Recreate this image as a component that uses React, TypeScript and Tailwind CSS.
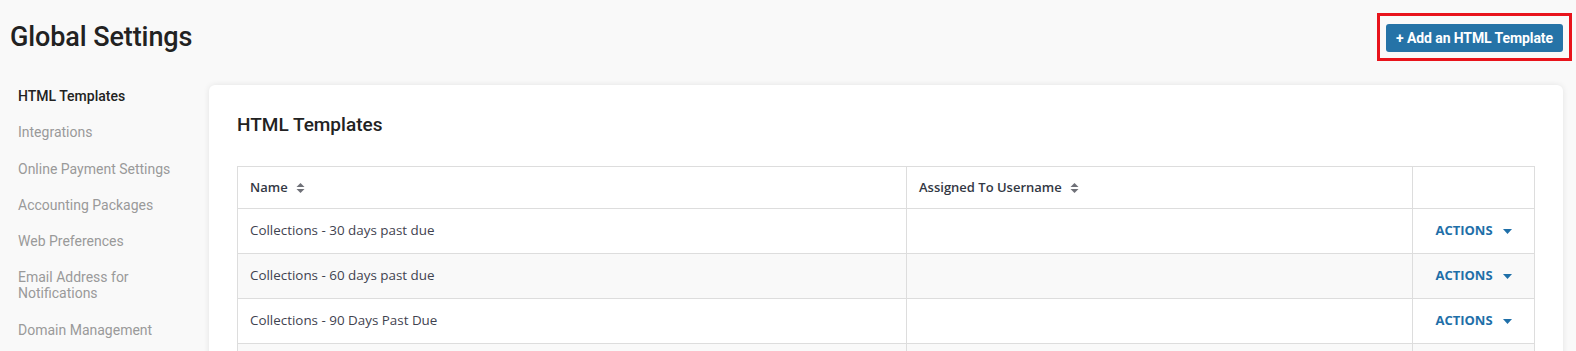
import React from 'react';

const navItems = [
  'HTML Templates',
  'Integrations',
  'Online Payment Settings',
  'Accounting Packages',
  'Web Preferences',
  'Email Address for Notifications',
  'Domain Management',
];

const templates = [
  'Collections - 30 days past due',
  'Collections - 60 days past due',
  'Collections - 90 Days Past Due',
  'Collections - 120 Days Past Due',
];

function SortIcon() {
  return (
    <svg width="9" height="12" viewBox="0 0 9 12" className="ml-2 shrink-0">
      <path d="M4.5 1 L8.5 5 H0.5 Z" fill="#6f7178" />
      <path d="M4.5 11 L8.5 7 H0.5 Z" fill="#6f7178" />
    </svg>
  );
}

function Caret() {
  return (
    <svg width="9" height="5" viewBox="0 0 9 5" className="ml-[10px]">
      <path d="M0 0 H9 L4.5 5 Z" fill="#1f6fa8" />
    </svg>
  );
}

export default function App() {
  return (
    <div className="min-h-[351px] bg-[#f9f9f9] font-['Roboto',sans-serif] overflow-hidden">
      {/* header */}
      <div className="flex items-center justify-between pl-[10px] pr-[4px] pt-[13px]">
        <h1 className="text-[27px] leading-[34px] font-medium text-[#222] tracking-[-0.1px]">Global Settings</h1>
        <div className="border-[3px] border-[#e8141c] pt-[8px] pb-[6px] px-[6px]">
          <button className="h-[28px] w-[177px] rounded-[3px] bg-[#2573a7] text-white text-[14px] font-bold tracking-[-0.1px] flex items-center justify-center">
            + Add an HTML Template
          </button>
        </div>
      </div>

      <div className="flex gap-[20px] pl-[18px] pr-[13px] mt-[24px]">
        {/* sidebar */}
        <nav className="w-[171px] shrink-0 pt-[3px] flex flex-col gap-[20.25px] text-[14px] leading-[16px]">
          {navItems.map((item, i) => (
            <a
              key={item}
              className={i === 0 ? 'font-medium text-[#222]' : 'text-[#9a9a9a]'}
            >
              {item}
            </a>
          ))}
        </nav>

        {/* card */}
        <div className="flex-1 bg-white rounded-[6px] shadow-[0_0_6px_rgba(0,0,0,0.09)] px-[28px] pt-[26px] pb-[20px]">
          <h2 className="text-[19px] leading-[28px] font-medium text-[#222]">HTML Templates</h2>

          <table className="mt-[27px] w-full border-collapse font-['Open_Sans',sans-serif] text-[13px] text-[#3f4350]">
            <thead>
              <tr className="h-[42px]">
                <th className="w-[669px] border border-[#dddddd] px-[12px] text-left font-semibold text-[#333844]">
                  <span className="flex items-center">Name<SortIcon /></span>
                </th>
                <th className="w-[506px] border border-[#dddddd] px-[12px] text-left font-semibold text-[#333844]">
                  <span className="flex items-center">Assigned To Username<SortIcon /></span>
                </th>
                <th className="border border-[#dddddd]"></th>
              </tr>
            </thead>
            <tbody>
              {templates.map((name, i) => (
                <tr key={name} className={i % 2 === 1 ? 'h-[45px] bg-[#f9f9f9]' : 'h-[45px] bg-white'}>
                  <td className="border border-[#dddddd] px-[12px] pb-[2px] text-[13.4px]">{name}</td>
                  <td className="border border-[#dddddd] px-[12px]"></td>
                  <td className="border border-[#dddddd]">
                    <span className="flex items-center justify-center font-bold text-[#1f6fa8]">
                      ACTIONS
                      <Caret />
                    </span>
                  </td>
                </tr>
              ))}
            </tbody>
          </table>
        </div>
      </div>
    </div>
  );
}
